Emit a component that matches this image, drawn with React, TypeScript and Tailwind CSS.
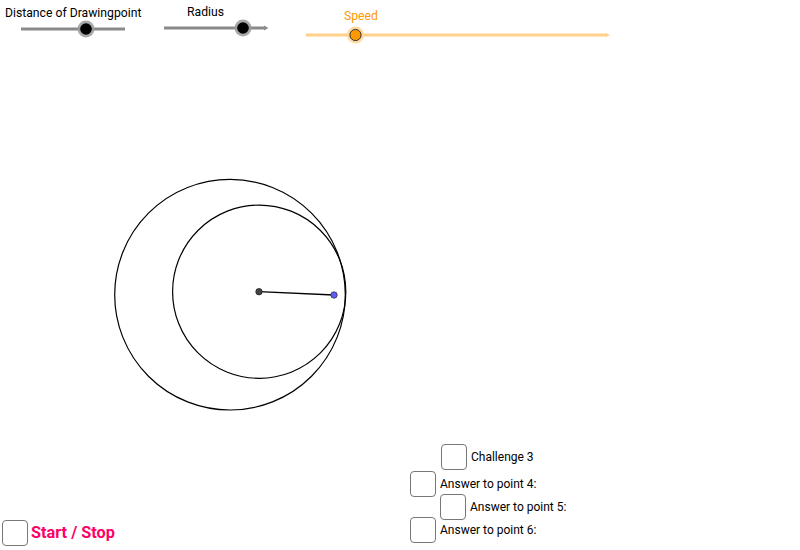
const FONT = { fontFamily: 'Roboto, "Liberation Sans", sans-serif' }

function Box({ label, className = '', labelClass = 'text-[12px] text-black' }: { label: string; className?: string; labelClass?: string }) {
  return (
    <label className={`flex items-center gap-[4px] ${className}`}>
      <span className="block h-[26px] w-[26px] shrink-0 rounded-[4px] border-[1.5px] border-[#777] bg-white" />
      <span className={labelClass}>{label}</span>
    </label>
  )
}

export default function App() {
  return (
    <div className="relative h-[550px] w-[800px] overflow-hidden bg-white" style={FONT}>
      {/* geogebra canvas */}
      <svg className="absolute inset-0" width="800" height="550" viewBox="0 0 800 550">
        {/* slider: distance */}
        <line x1="21" y1="29" x2="125" y2="29" stroke="#8a8a8a" strokeWidth="3" />
        <circle cx="86" cy="29" r="8.5" fill="#9a9a9a" opacity="0.85" />
        <circle cx="86" cy="29" r="5.8" fill="#000" />
        {/* slider: radius */}
        <line x1="164" y1="28" x2="265" y2="28" stroke="#8a8a8a" strokeWidth="3" />
        <path d="M264 25.5 L268.5 28 L264 30.5 Z" fill="#8a8a8a" />
        <circle cx="243" cy="28" r="8.5" fill="#9a9a9a" opacity="0.85" />
        <circle cx="243" cy="28" r="5.8" fill="#000" />
        {/* slider: speed */}
        <line x1="306" y1="35" x2="607" y2="35" stroke="#ffd08a" strokeWidth="3" />
        <path d="M606 33 L610 35 L606 37 Z" fill="#ffd08a" />
        <circle cx="355.5" cy="35" r="8.5" fill="#ffd9a0" />
        <circle cx="355.5" cy="35" r="5.6" fill="#ff9900" stroke="#333" strokeWidth="1" />

        {/* circles */}
        <circle cx="230" cy="294.7" r="115.3" fill="none" stroke="#000" strokeWidth="1.2" />
        <circle cx="259.2" cy="291.7" r="86.6" fill="none" stroke="#000" strokeWidth="1.2" />
        <line x1="259" y1="291.7" x2="334" y2="295" stroke="#000" strokeWidth="1.3" />
        <circle cx="259" cy="291.7" r="3.2" fill="#444" stroke="#222" strokeWidth="0.8" />
        <circle cx="334" cy="295" r="3.2" fill="#5c5cff" stroke="#333" strokeWidth="0.8" />
      </svg>

      {/* slider labels */}
      <span className="absolute left-[5px] top-[4px] text-[12.2px] leading-[18px] text-black">Distance of Drawingpoint</span>
      <span className="absolute left-[187px] top-[3px] text-[12.2px] leading-[18px] text-black">Radius</span>
      <span className="absolute left-[344px] top-[7px] text-[12.2px] leading-[18px] text-[#ff9900]">Speed</span>

      {/* answer checkboxes */}
      <div className="absolute left-[410px] top-[444px] flex flex-col">
        <Box label="Challenge 3" className="ml-[31px]" />
        <Box label="Answer to point 4:" className="mt-[1px]" />
        <Box label="Answer to point 5:" className="-mt-[3px] ml-[30px]" />
        <Box label="Answer to point 6:" className="-mt-[3px]" />
      </div>

      <Box
        label="Start / Stop"
        className="absolute left-[2px] top-[520px]"
        labelClass="-ml-[1px] text-[16.3px] font-bold text-[#ff0066]"
      />
    </div>
  )
}
